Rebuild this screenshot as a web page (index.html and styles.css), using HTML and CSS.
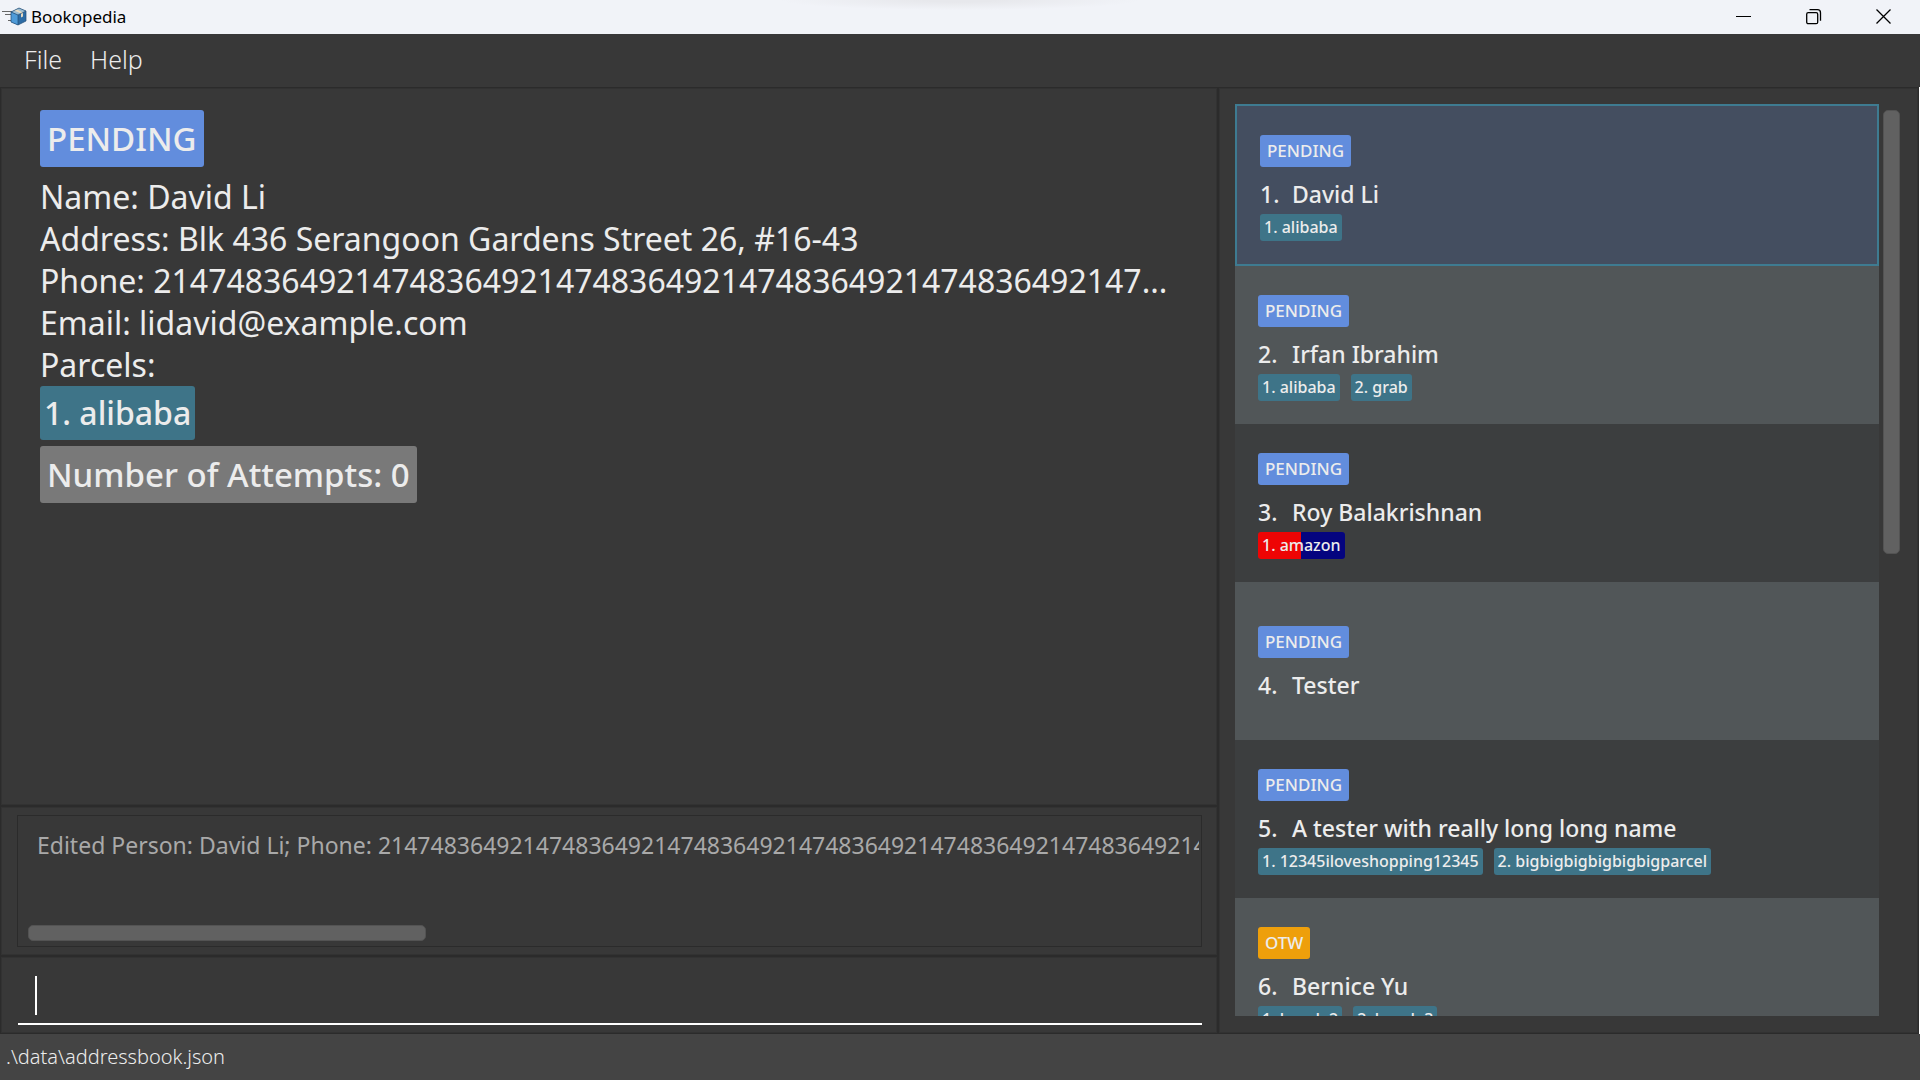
FILE: index.html
```html
<!DOCTYPE html>
<html lang="en">
<head>
<meta charset="utf-8">
<title>Bookopedia</title>
<link rel="stylesheet" href="styles.css">
</head>
<body>
<div class="window">
  <header class="titlebar">
    <svg class="app-icon" width="26" height="20" viewBox="0 0 26 20" aria-hidden="true">
      <path d="M0 4.500h11M3 7.500h7M6 13.500h5" stroke="#666" stroke-width="1" fill="none"/>
      <path d="M9 5l8-4 7 3v10l-8 4-7-3z" fill="#2d6ca5"/>
      <path d="M9 5l8-4 7 3-8 4z" fill="#9cbcd0"/>
      <path d="M9 5l7 3v10l-7-3z" fill="#4f9bd8"/>
      <path d="M12 3.500l7 3v4l2-1V5.500l-6-3z" fill="#e6d9c0"/>
      <path d="M9 5l8-4 7 3v10l-8 4-7-3zM16 8v10M9 5l7 3 8-4" fill="none" stroke="#234f78" stroke-opacity=".7" stroke-width="1"/>
    </svg>
    <h1 class="app-title">Bookopedia</h1>
    <div class="controls">
      <button class="control" type="button" aria-label="Minimize"><svg width="16" height="16" viewBox="0 0 16 16"><path d="M0 7.500h15" stroke="#000"/></svg></button>
      <button class="control" type="button" aria-label="Restore"><svg width="16" height="16" viewBox="0 0 16 16" fill="none" stroke="#000" stroke-width="1.300"><rect x=".7" y="3.700" width="11" height="11" rx="1.500"/><path d="M3.500.7h8a3 3 0 0 1 3 3v8"/></svg></button>
      <button class="control" type="button" aria-label="Close"><svg width="16" height="16" viewBox="0 0 16 16"><path d="M.5.500l14 14M14.500.500l-14 14" stroke="#000" stroke-width="1.300"/></svg></button>
    </div>
  </header>
  <nav class="menubar">
    <button class="menu" type="button">File</button>
    <button class="menu" type="button">Help</button>
  </nav>
  <main class="main">
    <div class="left">
      <section class="pane details">
        <span class="status status-large pending">PENDING</span>
        <div class="fields">
          <p class="field">Name: David Li</p>
          <p class="field">Address: Blk 436 Serangoon Gardens Street 26, #16-43</p>
          <p class="field">Phone: 214748364921474836492147483649214748364921474836492147...</p>
          <p class="field">Email: lidavid@example.com</p>
          <p class="field">Parcels:</p>
        </div>
        <span class="parcel-large">1. alibaba</span>
        <span class="status status-large attempts">Number of Attempts: 0</span>
      </section>
      <section class="pane result">
        <div class="result-box">
          <output class="result-text">Edited Person: David Li; Phone: 2147483649214748364921474836492147483649214748364921474836492147483649</output>
          <div class="thumb thumb-x"></div>
        </div>
      </section>
      <section class="pane command">
        <input class="command-input" type="text" aria-label="Command">
        <span class="caret"></span>
      </section>
    </div>
    <section class="pane people">
      <ul class="list">
        <li class="card selected">
          <span class="status pending">PENDING</span>
          <p class="name"><span class="number">1.</span>David Li</p>
          <div class="tags"><span class="tag">1. alibaba</span></div>
        </li>
        <li class="card">
          <span class="status pending">PENDING</span>
          <p class="name"><span class="number">2.</span>Irfan Ibrahim</p>
          <div class="tags"><span class="tag">1. alibaba</span><span class="tag">2. grab</span></div>
        </li>
        <li class="card">
          <span class="status pending">PENDING</span>
          <p class="name"><span class="number">3.</span>Roy Balakrishnan</p>
          <div class="tags"><span class="tag tag-split">1. amazon</span></div>
        </li>
        <li class="card">
          <span class="status pending">PENDING</span>
          <p class="name"><span class="number">4.</span>Tester</p>
        </li>
        <li class="card">
          <span class="status pending">PENDING</span>
          <p class="name"><span class="number">5.</span>A tester with really long long name</p>
          <div class="tags"><span class="tag">1. 12345iloveshopping12345</span><span class="tag">2. bigbigbigbigbigbigparcel</span></div>
        </li>
        <li class="card">
          <span class="status otw">OTW</span>
          <p class="name"><span class="number">6.</span>Bernice Yu</p>
          <div class="tags"><span class="tag">1. lazada2</span><span class="tag">2. lazada3</span></div>
        </li>
      </ul>
      <div class="track"><div class="thumb thumb-y"></div></div>
    </section>
  </main>
  <footer class="statusbar">.\data\addressbook.json</footer>
</div>
</body>
</html>
```
FILE: styles.css
```css
* { box-sizing: border-box; }

body {
  margin: 0;
  background: #383838;
  color: #ececec;
  font-family: "Noto Sans", "Open Sans", sans-serif;
}

button { border: 0; padding: 0; background: none; color: inherit; font: inherit; }
p, h1, ul { margin: 0; padding: 0; }

.window { display: flex; flex-direction: column; height: 100vh; overflow: hidden; }

.titlebar {
  display: flex;
  align-items: center;
  flex: none;
  height: 34px;
  padding: 0 1px 0 2px;
  color: #000;
  background:
    radial-gradient(ellipse 180px 10px at 50% 0, #e7e8ec 20%, transparent) no-repeat,
    #f1f3f8;
}
.app-icon { flex: none; }
.app-title { margin-left: 3px; font-size: 17px; line-height: 24px; font-weight: 400; }
.controls { display: flex; margin-left: auto; }
.control { display: flex; align-items: center; justify-content: center; width: 70px; height: 34px; }

.menubar {
  display: flex;
  flex: none;
  gap: 28px;
  height: 53px;
  padding: 0 24px;
  font-size: 25px;
  font-weight: 300;
}
.menu { height: 51px; line-height: 51px; }

.main {
  display: grid;
  grid-template-columns: 1218fr 701fr;
  flex: 1;
  min-height: 0;
  padding-right: 1px;
  background: #fff;
}
.left { display: grid; grid-template-rows: 1fr 150px 78px; min-width: 0; min-height: 0; }
.pane {
  position: relative;
  min-width: 0;
  min-height: 0;
  border: 1px solid #2b2b2b;
  box-shadow: inset 0 0 0 1px #323232;
  background: #383838;
}

.details { display: flex; flex-direction: column; align-items: flex-start; padding: 22px 8px 0 39px; }
.fields { width: 100%; padding-top: 9px; }
.field {
  overflow: hidden;
  font-size: 32px;
  line-height: 42px;
  white-space: nowrap;
  text-overflow: ellipsis;
}
.status {
  padding: 0 7px;
  border-radius: 3px;
  font-size: 17px;
  line-height: 32px;
  font-weight: 500;
}
.status-large { font-size: 33px; line-height: 57px; }
.pending { background: #628ddd; }
.otw { background: #ee9f0b; }
.attempts { margin-top: 6px; background: #797979; }
.parcel-large {
  padding: 0 4px;
  border-radius: 3px;
  background: #3e7488;
  font-size: 32px;
  line-height: 54px;
  font-weight: 500;
}

.result { padding: 8px 15px 8px 16px; }
.result-box {
  display: flex;
  flex-direction: column;
  justify-content: space-between;
  height: 100%;
  padding: 11px 2px 5px 10px;
  border: 1px solid #2b2b2b;
}
.result-text {
  overflow: hidden;
  padding-left: 9px;
  color: #a9a9a9;
  font-size: 23px;
  line-height: 36px;
  font-weight: 400;
  white-space: nowrap;
}
.thumb { border: 1px solid #535353; border-radius: 5px; background: #616161; }
.thumb-x { width: 34%; height: 16px; }

.command { padding: 8px 15px 8px 17px; }
.command-input {
  display: block;
  width: 100%;
  height: 60px;
  padding: 0 18px;
  border: 0;
  border-bottom: 2px solid #fff;
  outline: 0;
  background: none;
  color: #fff;
  font: 300 25px "Noto Sans", "Open Sans", sans-serif;
}
.caret { position: absolute; left: 34px; top: 19px; width: 2px; height: 39px; background: #fff; }

.people { display: flex; padding: 16px 18px 17px 16px; gap: 4px; }
.list { flex: 1; min-width: 0; overflow: hidden; list-style: none; }
.card {
  display: flex;
  flex-direction: column;
  align-items: flex-start;
  justify-content: center;
  height: 158px;
  padding: 6px 23px 0;
  background: #3c3e3f;
}
.card:nth-child(even) { background: #515658; }
.card.selected { height: 162px; padding-top: 5px; border: 2px solid #3e7b91; background: #444e60; }
.name { display: flex; margin-top: 9px; font-size: 23px; line-height: 36px; font-weight: 500; }
.number { width: 34px; }
.selected .number { width: 32px; }
.tags { display: flex; gap: 11px; margin-top: 2px; }
.tag {
  padding: 0 4px;
  border-radius: 3px;
  background: #3e7488;
  font-size: 16px;
  line-height: 27px;
  font-weight: 500;
}
.tag-split { background: linear-gradient(to right, #ee0404 50%, #04047f 50%); }
.track { flex: none; width: 17px; padding-top: 6px; }
.thumb-y { height: 49%; }

.statusbar {
  flex: none;
  height: 46px;
  padding: 0 6px;
  background: #444;
  font-size: 20px;
  line-height: 46px;
  font-weight: 300;
}
```
